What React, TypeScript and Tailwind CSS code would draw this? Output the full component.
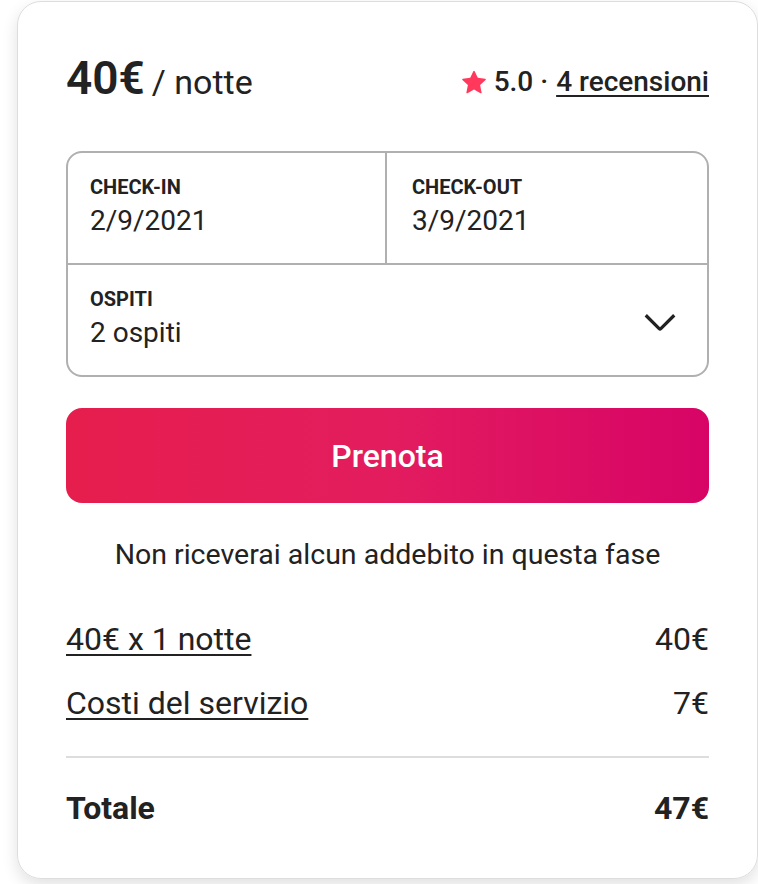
import React from "react";

const font = { fontFamily: "Roboto, 'Noto Sans', sans-serif" };

function Star() {
  return (
    <svg viewBox="0 0 32 32" className="w-[24px] h-[24px] fill-[#FF385C]">
      <path d="M15.094 1.579l-4.124 8.885-9.86 1.27a1 1 0 0 0-.542 1.736l7.293 6.565-1.965 9.852a1 1 0 0 0 1.483 1.061L16 25.951l8.625 4.997a1 1 0 0 0 1.482-1.06l-1.965-9.853 7.293-6.565a1 1 0 0 0-.541-1.735l-9.86-1.271-4.127-8.885a1 1 0 0 0-1.814 0z" />
    </svg>
  );
}

function Chevron() {
  return (
    <svg viewBox="0 0 32 32" className="w-[38px] h-[38px]" fill="none" stroke="#222222" strokeWidth={2.7}>
      <path d="M28 12 16.707 23.293a1 1 0 0 1-1.414 0L4 12" />
    </svg>
  );
}

export default function App() {
  return (
    <div className="w-[758px] h-[884px] bg-white pl-[17px] pt-[1px] text-[#222222]" style={font}>
      <div className="w-[741px] h-[878px] rounded-[24px] border border-[#dddddd] shadow-[0_6px_16px_rgba(0,0,0,0.12)] px-[48px] pt-[50px]">
        <div className="flex items-baseline justify-between">
          <div className="flex items-baseline gap-[7px]">
            <span className="text-[46px] leading-[52px] font-semibold">40€</span>
            <span className="text-[34px] leading-[38px]">/ notte</span>
          </div>
          <div className="flex items-center gap-[8px] text-[28px] leading-[34px] font-medium">
            <Star />
            <span>5.0 ·</span>
            <span className="underline underline-offset-[4px] decoration-[2px]">4 recensioni</span>
          </div>
        </div>

        <div className="mt-[47px] border-2 border-[#b0b0b0] rounded-[16px]">
          <div className="flex h-[112px] border-b-2 border-[#b0b0b0]">
            <div className="flex-1 border-r-2 border-[#b0b0b0] pl-[22px] pt-[22px]">
              <div className="text-[20px] leading-[24px] font-bold">CHECK-IN</div>
              <div className="text-[28px] leading-[36px] mt-[4px]">2/9/2021</div>
            </div>
            <div className="flex-1 pl-[25px] pt-[22px]">
              <div className="text-[20px] leading-[24px] font-bold">CHECK-OUT</div>
              <div className="text-[28px] leading-[36px] mt-[4px]">3/9/2021</div>
            </div>
          </div>
          <div className="flex h-[110px] items-center justify-between pl-[22px] pr-[28px]">
            <div className="pb-[2px]">
              <div className="text-[20px] leading-[24px] font-bold">OSPITI</div>
              <div className="text-[28px] leading-[36px] mt-[4px]">2 ospiti</div>
            </div>
            <Chevron />
          </div>
        </div>

        <button className="mt-[31px] w-full h-[95px] rounded-[16px] bg-[linear-gradient(to_right,#E61E4D_0%,#E31C5F_50%,#D70466_100%)] text-white text-[32px] font-medium">
          Prenota
        </button>

        <div className="mt-[34px] text-center text-[28.5px] leading-[36px]">Non riceverai alcun addebito in questa fase</div>

        <div className="mt-[46px] flex justify-between text-[32px] leading-[40px]">
          <span className="underline underline-offset-[4px] decoration-[2px]">40€ x 1 notte</span>
          <span>40€</span>
        </div>
        <div className="mt-[24px] flex justify-between text-[32px] leading-[40px]">
          <span className="underline underline-offset-[4px] decoration-[2px]">Costi del servizio</span>
          <span>7€</span>
        </div>
        <div className="mt-[33px] border-t-2 border-[#dddddd]" />
        <div className="mt-[30px] flex justify-between text-[32px] leading-[40px] font-bold">
          <span>Totale</span>
          <span>47€</span>
        </div>
      </div>
    </div>
  );
}
